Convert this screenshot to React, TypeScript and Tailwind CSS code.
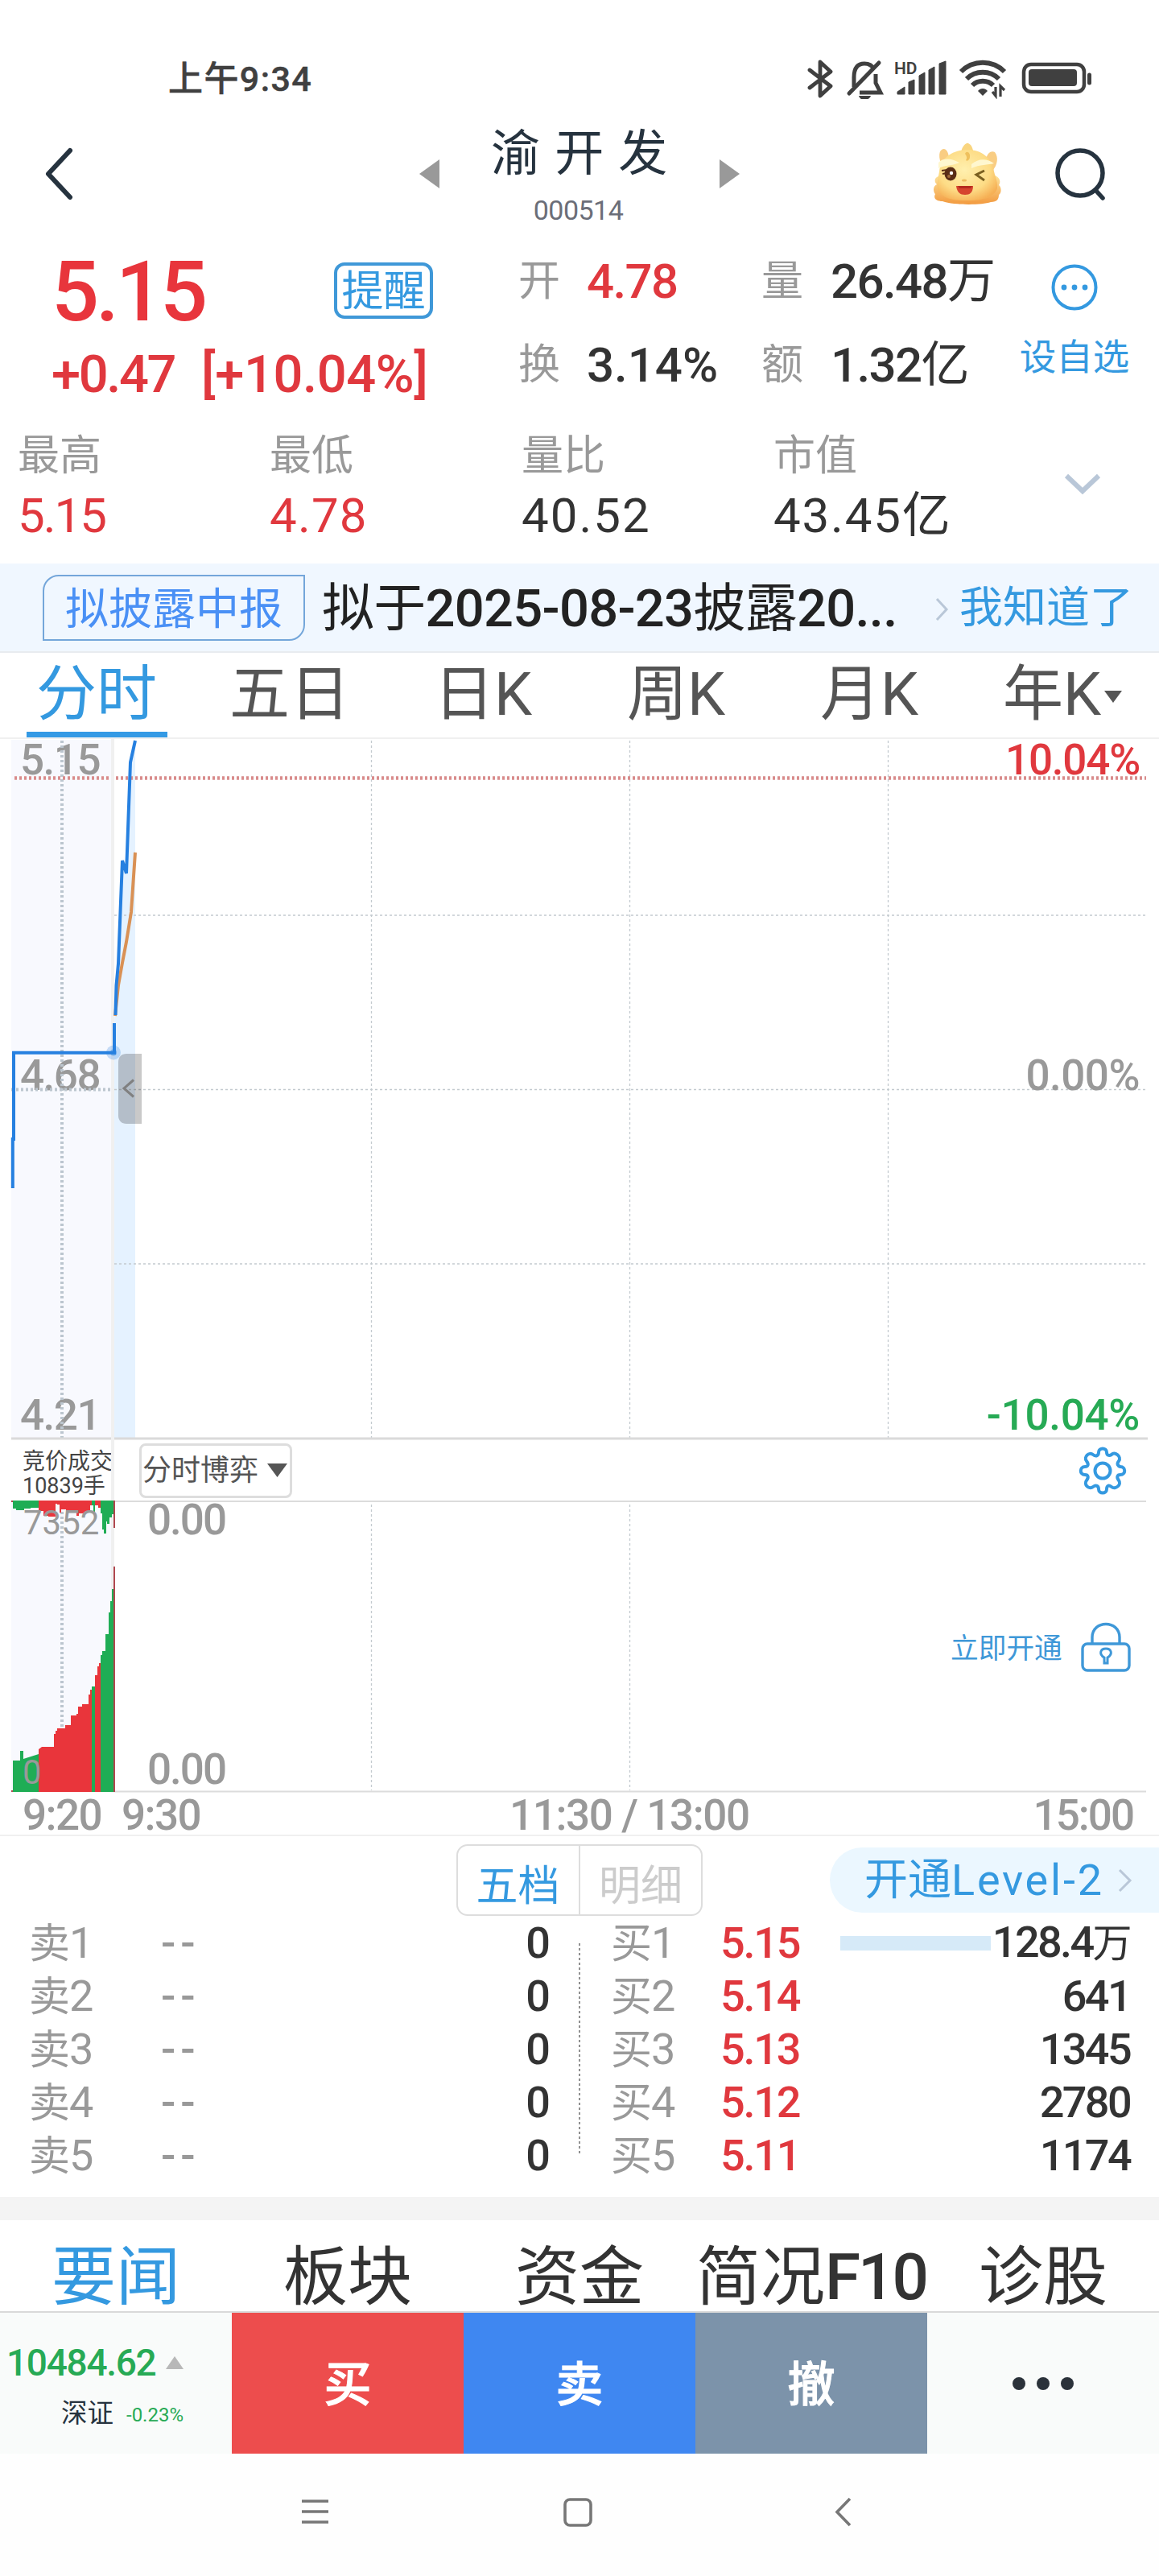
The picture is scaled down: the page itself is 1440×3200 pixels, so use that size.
import React from "react";
import clsx from "clsx";

const STATS = [
  { label: "最高", value: "5.15", className: "text-[#e0383e] tracking-[-2px]" },
  { label: "最低", value: "4.78", className: "text-[#e0383e] tracking-[1.2px]" },
  { label: "量比", value: "40.52", className: "text-[#333] tracking-[2px]" },
  { label: "市值", value: "43.45亿", className: "text-[#333] tracking-[1.8px]" },
];

const PERIODS = ["分时", "五日", "日K", "周K", "月K", "年K"];

const SELLS = [1, 2, 3, 4, 5];

const BUYS = [
  { level: 1, price: "5.15", volume: "128.4万", bar: true },
  { level: 2, price: "5.14", volume: "641" },
  { level: 3, price: "5.13", volume: "1345" },
  { level: 4, price: "5.12", volume: "2780" },
  { level: 5, price: "5.11", volume: "1174" },
];

const NEWS_TABS = ["要闻", "板块", "资金", "简况F10", "诊股"];

function StatusBar() {
  return (
    <div className="flex h-[122px] items-center pt-[73px] pl-[209px] pr-[84px]">
      <span className="text-[43px] leading-[50px] font-medium tracking-[1.4px] text-[#404040] [-webkit-text-stroke:0.5px]">上午9:34</span>
      <svg className="ml-auto" width="356" height="50" viewBox="0 0 356 50" fill="none">
        {/* bluetooth */}
        <path d="M4 14L30 34L17 46V4L30 16L4 36" transform="translate(2 0)" stroke="#404040" strokeWidth="4.8" strokeLinejoin="round" strokeLinecap="round" />
        {/* muted bell */}
        <path d="M60 35V23C60 12 64 6 73 6C80 6 83 9 85 13M87 19V30L93 42H67" transform="translate(1 0)" stroke="#404040" strokeWidth="5" />
        <path d="M92 5L55 43" stroke="#404040" strokeWidth="5" strokeLinecap="round" />
        <path d="M67 46H82C81 49 78 51 74 51S68 49 67 46Z" fill="#404040" />
        {/* signal */}
        <text x="111" y="19" fontSize="21" fontWeight="600" fill="#404040">HD</text>
        <path d="M115 44V41L124 35V44ZM129 44V29L136 26V44ZM142 44V21L149 17V44ZM154 44V14L161 10V44ZM167 44V6L175 3V44Z" fill="#404040" stroke="#404040" strokeWidth="1" strokeLinejoin="round" />
        {/* wifi */}
        <path d="M194 16C209 1 233 1 248 16M201 25C212 14 230 14 241 25M208 33C215 26 227 26 234 33" stroke="#404040" strokeWidth="6" />
        <path d="M221 46L215 40C218 36 224 36 227 40Z" fill="#404040" />
        <path d="M237 35V46L233 41M243 47V34L248 39" stroke="#404040" strokeWidth="3.2" />
        {/* battery */}
        <rect x="272" y="7" width="75" height="34" rx="9" stroke="#404040" strokeWidth="4.5" />
        <rect x="278" y="13" width="60" height="21" rx="4" fill="#404040" />
        <path d="M353.5 20V30" stroke="#404040" strokeWidth="5" strokeLinecap="round" />
      </svg>
    </div>
  );
}

function DragonFace() {
  return (
    <svg width="86" height="78" viewBox="0 0 86 78">
      <defs>
        <radialGradient id="face" cx="0.45" cy="0.4" r="0.65">
          <stop offset="0" stopColor="#fff0ae" />
          <stop offset="0.65" stopColor="#fddc86" />
          <stop offset="1" stopColor="#f6b055" />
        </radialGradient>
        <linearGradient id="mane" x1="0" y1="0" x2="0" y2="1">
          <stop offset="0" stopColor="#fde29a" />
          <stop offset="1" stopColor="#f29a3f" />
        </linearGradient>
      </defs>
      <path d="M7 42C1 44 2 50 5 52C-1 55 1 62 3 64C0 70 5 73 12 73C26 78 60 78 72 74C80 74 82 70 82 65C86 62 85 55 82 53C86 46 80 42 77 41Z" fill="url(#mane)" />
      <path d="M10 26C6 14 9 8 14 8C18 9 20 14 20 22ZM66 21C68 12 73 10 77 12C82 18 80 28 75 34Z" fill="#f9cd83" />
      <path d="M35 12C37 3 42 0 44 1C49 3 49 8 51 12Z" fill="#f9d57f" />
      <path d="M8 36C10 18 26 9 43 9C60 9 74 19 76 36C78 44 81 50 80 57C76 70 58 72 43 72C26 72 9 70 6 57C5 49 7 43 8 36Z" fill="url(#face)" />
      <path d="M40 14C42 9 47 13 46 18C46 21 43 24 41 22C43 19 42 17 40 14Z" fill="#efc05d" />
      <path d="M7 25C13 18 24 20 33 25C25 29 15 28 7 32ZM48 27C57 19 68 20 76 26C69 28 58 27 48 32Z" fill="#fff7cf" />
      <ellipse cx="22" cy="39" rx="7.5" ry="8.5" fill="#5a2d16" />
      <path d="M11 35L18 34M12 39L17 38" stroke="#5a2d16" strokeWidth="2" />
      <circle cx="23" cy="38" r="2.2" fill="#fff" />
      <circle cx="20" cy="42" r="2" fill="#a0693a" />
      <path d="M64 35L54 40L64 47" fill="none" stroke="#7a6020" strokeWidth="3" />
      <ellipse cx="39" cy="47" rx="3" ry="1.5" fill="#edbd62" />
      <path d="M29 54H50C50 62 46 65 40 65S30 62 29 54Z" fill="#d6452e" />
      <path d="M31 54H49L47 57H33Z" fill="#b52a1e" />
    </svg>
  );
}

function Header() {
  return (
    <div className="flex h-[186px] items-center pt-0.5 pl-[54px] pr-[63px]">
      <svg width="40" height="66" viewBox="0 0 40 66" fill="none" stroke="#26333f" strokeWidth="6" strokeLinecap="round" strokeLinejoin="round">
        <path d="M33 4L6 33L33 62" />
      </svg>
      <svg className="ml-[427px]" width="26" height="36" viewBox="0 0 26 36">
        <path d="M0 18L25 0V36Z" fill="#999" />
      </svg>
      <div className="flex w-[347px] flex-col items-center gap-4 pt-1">
        <h1 className="text-[61px] leading-[70px] tracking-[1.5px] whitespace-pre text-[#26333f]">渝 开 发</h1>
        <span className="pr-1 text-[34px] leading-[38px] tracking-[-0.5px] text-[#6b6e78]">000514</span>
      </div>
      <svg width="26" height="36" viewBox="0 0 26 36">
        <path d="M25 18L0 0V36Z" fill="#999" />
      </svg>
      <div className="ml-auto flex items-center gap-[66px]">
        <DragonFace />
        <svg width="66" height="68" viewBox="0 0 66 68" fill="none" stroke="#26333f" strokeWidth="5.5" strokeLinecap="round">
          <circle cx="31" cy="33" r="28" />
          <path d="M50 54L59 64" />
        </svg>
      </div>
    </div>
  );
}

function Quote() {
  return (
    <>
      <div className="flex h-[206px]">
        <div className="w-[644px] font-medium text-[#e8353c]">
          <div className="flex h-[106px] items-center pl-[64px]">
            <span className="w-[351px] pt-1 text-[104px] leading-[106px] tracking-[-4px]">5.15</span>
            <span className="flex h-[70px] w-[123px] items-center justify-center rounded-[13px] border-4 border-[#3f98d8] pt-1 text-[52px] leading-[54px] font-normal text-[#3499e0]">
              提醒
            </span>
          </div>
          <div className="flex h-[100px] items-center pt-0.5 pl-[64px] text-[65px] leading-[70px] text-[#e0383e]">
            <span className="w-[186px] tracking-[-2.4px]">+0.47</span>
            <span className="tracking-[-0.4px]">[+10.04%]</span>
          </div>
        </div>
        <div className="grid grid-cols-[85px_217px_86px_216px] grid-rows-[84px_124px] items-center text-[60px] leading-[64px] font-medium text-[#333]">
          <span className="text-[52px] font-normal text-[#999]">开</span>
          <span className="tracking-[-1.6px] text-[#e0383e]">4.78</span>
          <span className="text-[52px] font-normal text-[#999]">量</span>
          <span className="whitespace-nowrap tracking-[-1.6px]">26.48<span className="font-normal">万</span></span>
          <span className="text-[52px] font-normal text-[#999]">换</span>
          <span>3.14%</span>
          <span className="text-[52px] font-normal text-[#999]">额</span>
          <span className="whitespace-nowrap tracking-[-1.6px]">1.32<span className="font-normal">亿</span></span>
        </div>
        <div className="flex w-[174px] flex-col items-center gap-[29px] pt-[20px] text-[#3499e0]">
          <svg width="58" height="58" viewBox="0 0 58 58" fill="none">
            <circle cx="29" cy="29" r="26.5" stroke="#3499e0" strokeWidth="4" />
            <g fill="#3499e0">
              <circle cx="16" cy="29" r="3.4" />
              <circle cx="29" cy="29" r="3.4" />
              <circle cx="42" cy="29" r="3.4" />
            </g>
          </svg>
          <span className="text-[45.5px] leading-[60px] whitespace-nowrap">设自选</span>
        </div>
      </div>
      <div className="flex h-[186px] pl-[22px]">
        {STATS.map(({ label, value, className }) => (
          <div key={label} className="w-[313px]">
            <div className="h-[103px] text-[52px] leading-[106px] text-[#999]">{label}</div>
            <div className={clsx("text-[60px] leading-[48px] whitespace-nowrap", className)}>{value}</div>
          </div>
        ))}
        <svg className="mt-[73px] ml-[48px]" width="46" height="30" viewBox="0 0 46 30" fill="none">
          <path d="M3 4L23 23L43 4" stroke="#b9c7d8" strokeWidth="6" />
        </svg>
      </div>
    </>
  );
}

function NoticeBar() {
  return (
    <div className="flex h-[111px] items-center border-b-2 border-[#e8ebef] bg-[#f0f7ff] pl-[53px]">
      <span className="h-[82px] w-[326px] rounded-tl-[20px] rounded-br-[20px] border-2 border-[#74a6da] text-center text-[54px] leading-[84px] text-[#4a90f5]">
        拟披露中报
      </span>
      <span className="ml-[21px] w-[756px] pt-0.5 text-[65px] leading-[90px] font-medium tracking-[-0.7px] whitespace-nowrap text-[#222]">
        <span className="font-normal">拟于</span>2025-08-23<span className="font-normal">披露</span>20...
      </span>
      <svg className="mt-1 ml-[6px]" width="17" height="32" viewBox="0 0 17 32" fill="none">
        <path d="M2 3L14 16L2 29" stroke="#b9c7d8" strokeWidth="3" />
      </svg>
      <span className="ml-[13px] pt-0.5 text-[54px] leading-[80px] whitespace-nowrap text-[#3499e0]">我知道了</span>
    </div>
  );
}

function PeriodTabs() {
  return (
    <div className="flex h-[107px] border-b-2 border-[#f0f0f0]">
      {PERIODS.map((name, i) => (
        <div key={name} className={clsx("flex w-[240px] flex-col items-center", i === 0 ? "text-[#3499e0]" : "text-[#555]")}>
          <div className="flex h-[98px] items-center pt-1 text-[75px] leading-[90px]">
            {name}
            {i === 5 && (
              <svg className="mt-1.5 ml-1" width="22" height="15" viewBox="0 0 22 15">
                <path d="M0 0H22L11 15Z" fill="#555" />
              </svg>
            )}
          </div>
          {i === 0 && <div className="h-[7px] w-[175px] bg-[#349ae5]" />}
        </div>
      ))}
    </div>
  );
}

function PriceChart() {
  return (
    <svg className="block overflow-visible" width="1440" height="871" viewBox="0 918 1440 871" fill="none">
      <rect x="14" y="919" width="124" height="869" fill="#f8f9fe" />
      <rect x="138" y="918" width="4" height="871" fill="#f0f0f0" />
      <path d="M142 1271L144 1224L147 1197L152 1068L157 1085L162 947L168 920V1786H142Z" fill="#e5f2ff" />
      {/* grid */}
      <g stroke="#c3cacf" strokeWidth="1.3" strokeDasharray="3 3">
        <path d="M142 1137H1424M142 1353.5H1424M142 1570H1424" />
        <path d="M461.5 920V1786M782.5 920V1786M1103.5 920V1786" />
      </g>
      <g fontSize="53" fontWeight="500" fill="#999" letterSpacing="-1.5">
        <text x="25" y="962">5.15</text>
        <text x="25" y="1353.5">4.68</text>
        <text x="25" y="1776">4.21</text>
        <text x="1416" y="1353.5" textAnchor="end" letterSpacing="-0.5">0.00%</text>
        <text x="1416" y="1776" textAnchor="end" letterSpacing="-0.3" fill="#27aa55">-10.04%</text>
        <text x="1416" y="962" textAnchor="end" letterSpacing="-1.2" fill="#e0383e">10.04%</text>
      </g>
      <g stroke="#bcc6cf" strokeWidth="4" strokeDasharray="3 3">
        <path d="M77 920V1786" />
        <path d="M14 1353.5H137" />
      </g>
      <path d="M18 966.5H137M144 966.5H1424" stroke="#d98c8c" strokeWidth="4.6" strokeDasharray="3 3" />
      <path d="M14 1787H138M142 1787H1426" stroke="#dadada" strokeWidth="3" />
      {/* average and price */}
      <path d="M143 1262L147 1224L152 1196L157 1170L163 1133L168 1059" stroke="#d99155" strokeWidth="4" />
      <path d="M143.5 1261L144.5 1224L147 1197L152 1069L157 1085L162 947L168 920" stroke="#2680e0" strokeWidth="4" />
      <path d="M15.8 1476V1415H17V1307.7H142V1271" stroke="#2680e0" strokeWidth="4" />
      <circle cx="141" cy="1307.5" r="9" fill="#2680e0" fillOpacity="0.25" />
      <circle cx="141" cy="1307.5" r="4" fill="#2680e0" fillOpacity="0.45" />
      {/* drawer handle */}
      <path d="M176 1309H157C151 1309 147 1313 147 1319V1386C147 1392 151 1396 157 1396H176Z" fill="#000" fillOpacity="0.21" />
      <path d="M166 1341.5L154 1352L166 1362.5" stroke="#808080" strokeWidth="3" />
    </svg>
  );
}

function ChartToolbar() {
  return (
    <div className="flex h-[75px] items-center">
      <div className="h-full w-[142px] overflow-hidden border-r-4 border-[#f0f0f0] pt-[12px] pl-[28px] text-[28px] leading-[30px] whitespace-nowrap text-[#444]">
        <div>竞价成交</div>
        <div className="text-[27px]">10839手</div>
      </div>
      <button className="ml-[31px] flex h-[68px] w-[190px] items-center rounded-lg border-[3px] border-[#ddd] pl-px text-[36px] leading-[50px] text-[#555]">
        分时博弈
        <svg className="ml-[11px]" width="25" height="17" viewBox="0 0 25 17">
          <path d="M0 0H25L12.5 17Z" fill="#555" />
        </svg>
      </button>
      <svg className="ml-auto mr-[39px]" width="62" height="62" viewBox="0 0 62 62" fill="none" stroke="#3499e0" strokeWidth="4" strokeLinejoin="round">
        <path d="M26 8C26 2 36 2 36 8C36 12 39 13 42 11C46 6 55 14 51 19C48 23 50 25 53 26C60 26 60 36 53 36C49 36 48 39 51 43C55 48 47 55 42 51C38 48 36 50 36 54C36 60 26 60 26 54C26 50 23 48 19 51C14 55 7 48 11 43C14 39 13 36 9 36C2 36 2 26 9 26C13 26 14 23 11 19C7 14 14 7 19 11C23 14 26 12 26 8Z" />
        <circle cx="31" cy="31" r="9.5" />
      </svg>
    </div>
  );
}

function VolumeChart() {
  return (
    <svg className="block overflow-visible" width="1440" height="363" viewBox="0 1864 1440 363" fill="none">
      <rect x="14" y="1866" width="124" height="359" fill="#f8f9fe" />
      <rect x="138" y="1864" width="4" height="363" fill="#f0f0f0" />
      <path d="M142 1865H1424M142 2225.5H1424" stroke="#dcdcdc" strokeWidth="2" />
      <path d="M461.5 1869V2224M782.5 1869V2224" stroke="#c3cacf" strokeWidth="1.3" strokeDasharray="3 3" />
      <path d="M77 1866V2148" stroke="#bcc6cf" strokeWidth="4" strokeDasharray="3 3" />
      {/* unmatched volume, hangs from the top */}
      <path d="M16 1864H48V1873H38V1874H30V1876H20V1874H16ZM114 1864H118V1878H116V1870H114ZM125 1864H141V1881H139V1885H136V1893H133V1890H132V1905H129V1900H127V1880H125Z" fill="#1fad55" />
      <path d="M48 1864H114V1870H112V1877H106V1880H98V1883H95V1876H90V1878H82V1875H76V1879H74V1869H71V1868H69V1884H60V1883H54V1877H48ZM118 1864H125V1873H122V1870H118Z" fill="#e9353b" />
      <path d="M14 1865H16M142 1864V1898" stroke="#b0484f" strokeWidth="2" />
      {/* matched volume */}
      <path d="M16 2226V2187H25V2175H29V2185L48 2179V2226ZM114 2226V2095H118V2226ZM125 2226V2056H127V2051H131V2030H135V2003H137V1989H139V1974H141V2226Z" fill="#1fad55" />
      <path d="M48 2226V2173L52 2170H67V2154H69V2150H71V2147H81V2143H88V2131H95V2129H97V2120H102V2117H110V2105H112V2099H114V2226ZM118 2226V2081H121V2070H123V2066H125V2226Z" fill="#e9353b" />
      <path d="M14 2225H16M142 1946V2226" stroke="#b0484f" strokeWidth="2" />
      <g fontSize="53" fontWeight="500" fill="#999">
        <text x="29" y="1906" fontSize="42" fontWeight="400">7352</text>
        <text x="28" y="2216" fontSize="42" fontWeight="400">0</text>
        <text x="183" y="1906" letterSpacing="-2">0.00</text>
        <text x="183" y="2216" letterSpacing="-2">0.00</text>
      </g>
      <text x="1181" y="2060" fontSize="34.7" fill="#3f98d8">立即开通</text>
      <g stroke="#3f98d8" strokeWidth="3.4">
        <rect x="1345" y="2042" width="58" height="33" rx="6" />
        <path d="M1357 2041V2034C1357 2012 1391 2012 1391 2034V2041" />
        <path d="M1372 2059C1365 2055 1367 2048 1374 2048S1383 2055 1376 2059L1376 2066H1372Z" strokeWidth="3" />
      </g>
    </svg>
  );
}

function TimeAxis() {
  return (
    <div className="flex h-[54px] items-center border-b-2 border-[#f0f0f0] pt-[3px] pl-[28px] pr-[32px] text-[53px] leading-[52px] font-medium whitespace-nowrap text-[#999]">
      <span className="w-[123px] tracking-[-1.6px]">9:20</span>
      <span className="w-[482px] tracking-[-1.6px]">9:30</span>
      <span className="tracking-[-1.4px]">11:30 / 13:00</span>
      <span className="ml-auto tracking-[-2px]">15:00</span>
    </div>
  );
}

function OrderBook() {
  return (
    <div className="h-[448px] pt-[10px]">
      <div className="flex h-[89px] items-center">
        <div className="ml-[567px] flex h-[89px] w-[306px] rounded-[14px] border-2 border-[#ddd] text-center text-[52px] leading-[101px]">
          <div className="w-[152px] border-r-2 border-[#ddd] pr-px text-[#3499e0]">五档</div>
          <div className="flex-1 text-[#ccc]">明细</div>
        </div>
        <div className="ml-auto flex h-[81px] w-[409px] items-center rounded-l-full bg-[#ebf7ff] pl-[43px] text-[54px] leading-[80px] whitespace-nowrap text-[#3499e0]">
          开通<span className="tracking-[2.8px]">Level-2</span>
          <svg className="ml-auto mr-[33px]" width="18" height="30" viewBox="0 0 18 30" fill="none">
            <path d="M2 2L15 15L2 28" stroke="#b9c7d8" strokeWidth="3" />
          </svg>
        </div>
      </div>
      <div className="flex pt-px text-[54px] leading-[66px] font-medium text-[#333]">
        <div className="w-[719px] shrink-0 pr-[35px] pl-[36px]">
          {SELLS.map((level) => (
            <div key={level} className="flex h-[66px]">
              <span className="w-[164px] font-normal tracking-[-1px] text-[#999]"><span className="text-[51px]">卖</span>{level}</span>
              <span className="tracking-[6px] text-[#999]">--</span>
              <span className="ml-auto">0</span>
            </div>
          ))}
        </div>
        <div className="mt-[33px] h-[264px] w-0.5 shrink-0 bg-[repeating-linear-gradient(to_bottom,#909090_0_3px,transparent_3px_6px)]" />
        <div className="flex-1 pr-[36px] pl-[38px]">
          {BUYS.map(({ level, price, volume, bar }) => (
            <div key={level} className="flex h-[66px] items-center">
              <span className="w-[136px] shrink-0 font-normal tracking-[-1px] text-[#999]"><span className="text-[51px]">买</span>{level}</span>
              <span className="w-[149px] shrink-0 tracking-[-2.2px] text-[#e0383e]">{price}</span>
              {bar && <span className="h-[18px] w-[187px] shrink-0 bg-[#d6eaf8]" />}
              <span className="ml-auto whitespace-nowrap tracking-[-2.6px]">
                {volume.replace("万", "")}
                {volume.endsWith("万") && <span className="text-[49px] font-normal">万</span>}
              </span>
            </div>
          ))}
        </div>
      </div>
    </div>
  );
}

function NewsTabs() {
  return (
    <div className="h-[144px] border-t-[29px] border-b-2 border-t-[#f4f4f4] border-b-[#d9d9d9]">
      <div className="grid grid-cols-5 text-center text-[80px] leading-[143px] whitespace-nowrap">
        {NEWS_TABS.map((name, i) => (
          <span key={name} className={i === 0 ? "text-[#3499e0]" : "text-[#333]"}>
            {name.replace("F10", "")}
            {name.endsWith("F10") && <span className="font-medium tracking-[-3px]">F10</span>}
          </span>
        ))}
      </div>
    </div>
  );
}

function TradeBar() {
  return (
    <div className="grid h-[175px] grid-cols-5 grid-rows-[175px] bg-[#f9fbfa] text-center text-[59px] leading-[180px] font-medium text-white">
      <div className="flex flex-col pt-[36px] text-left font-normal">
        <div className="flex items-center pl-[8px] text-[46px] leading-[52px] text-[#27aa55]">
          <span className="w-[198px] font-medium tracking-[-1.3px]">10484.62</span>
          <svg width="22" height="16" viewBox="0 0 22 16">
            <path d="M11 0L22 16H0Z" fill="#b8b8b8" />
          </svg>
        </div>
        <div className="flex items-center pt-2.5 pl-[76px] leading-[50px]">
          <span className="w-[81px] text-[32.5px] text-[#26333f]">深证</span>
          <span className="pt-1 text-[24px] text-[#27aa55]">-0.23%</span>
        </div>
      </div>
      <div className="bg-[#ed4d4d] [-webkit-text-stroke:1px]">买</div>
      <div className="bg-[#3f87f1] [-webkit-text-stroke:1px]">卖</div>
      <div className="bg-[#7c93aa] [-webkit-text-stroke:1px]">撤</div>
      <div className="flex items-center justify-center gap-[14px]">
        <i className="h-4 w-4 rounded-full bg-[#2b323a]" />
        <i className="h-4 w-4 rounded-full bg-[#2b323a]" />
        <i className="h-4 w-4 rounded-full bg-[#2b323a]" />
      </div>
    </div>
  );
}

function SystemNav() {
  return (
    <div className="flex h-[152px] items-start bg-[#fefefe] pt-[54px] pl-[374px]">
      <svg width="686" height="38" viewBox="0 0 686 38" fill="none" stroke="#777" strokeWidth="3.6">
        <path d="M1 5H34M1 18H34M1 31H34" />
        <rect x="328" y="3" width="32" height="32" rx="6" />
        <path d="M682 2L666 18.5L682 35" />
      </svg>
    </div>
  );
}

export default function App() {
  return (
    <div className="h-[3200px] w-[1440px] overflow-hidden bg-white font-['Roboto','Noto_Sans_CJK_SC',sans-serif]">
      <StatusBar />
      <Header />
      <Quote />
      <NoticeBar />
      <PeriodTabs />
      <PriceChart />
      <ChartToolbar />
      <VolumeChart />
      <TimeAxis />
      <OrderBook />
      <NewsTabs />
      <TradeBar />
      <SystemNav />
    </div>
  );
}
